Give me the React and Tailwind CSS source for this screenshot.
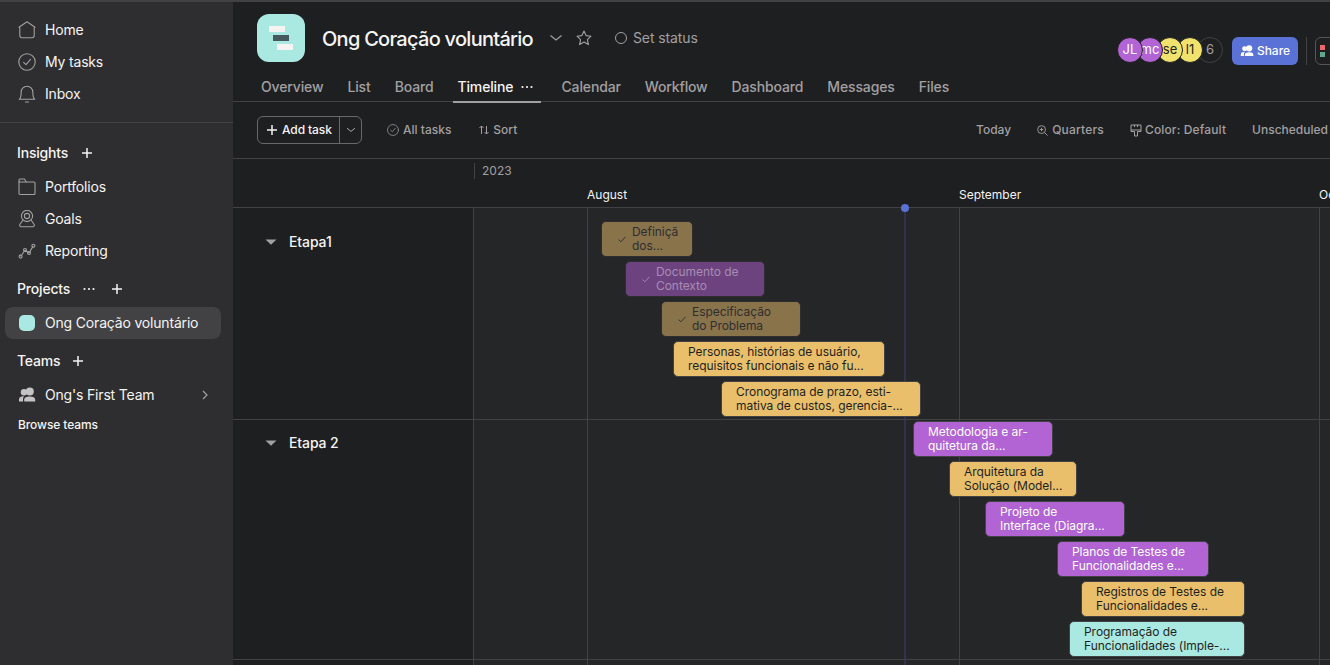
import React from "react";

const Ico = ({ children, className = "", size = 18, vb = 18 }) => (
  <svg width={size} height={size} viewBox={`0 0 ${vb} ${vb}`} fill="none" stroke="currentColor" strokeWidth="1.1" strokeLinecap="round" strokeLinejoin="round" className={"shrink-0 " + className}>{children}</svg>
);
const HomeI = () => <Ico><path d="M9 0.8 L17 6.2 L16.2 7 V14.5 A2.2 2.2 0 0 1 14 16.7 H4 A2.2 2.2 0 0 1 1.8 14.5 V7 L1 6.2 Z" /></Ico>;
const CheckCircle = ({ size = 18 }) => <Ico size={size}><circle cx="9" cy="9" r="8.2" /><path d="M5.6 9.3 L8 11.6 L12.5 6.4" /></Ico>;
const BellI = () => <Ico><path d="M1.2 14.3 C3 13 3.2 11 3.2 7 A5.8 5.8 0 0 1 14.8 7 C14.8 11 15 13 16.8 14.3 Z" /><path d="M7.5 17 H10.5" /></Ico>;
const FolderI = () => <Ico><path d="M1 2 A1 1 0 0 1 2 1 H6.5 L8.2 4 H16 A1 1 0 0 1 17 5 V15.5 A1 1 0 0 1 16 16.5 H2 A1 1 0 0 1 1 15.5 Z" /><path d="M1 4 H8" /></Ico>;
const GoalI = () => <Ico><circle cx="9" cy="6" r="5.6" /><circle cx="9" cy="6" r="2.6" /><path d="M5 10 L1.8 14.5 A1.6 1.6 0 0 0 3.2 16.8 H14.8 A1.6 1.6 0 0 0 16.2 14.5 L13 10" /></Ico>;
const ReportI = () => <Ico><path d="M3 14 L7 8.2 L11 11 L15 4.4" /><circle cx="2.6" cy="14.6" r="1.5" /><circle cx="7" cy="8" r="1.5" /><circle cx="11" cy="11" r="1.5" /><circle cx="15.4" cy="3.8" r="1.5" /></Ico>;
const TeamI = ({ size = 18, className = "" }) => (
  <svg width={size} height={size} viewBox="0 0 18 18" fill="currentColor" className={"shrink-0 " + className}>
    <circle cx="6" cy="6.2" r="3.2" /><circle cx="11.8" cy="5.6" r="4" />
    <path d="M1 15.5 V13.5 C1 11.2 3 10.3 5.4 10.3 H6.4 C5.4 11 5 12 5 13.5 V15.5 Z" />
    <path d="M6.2 15.5 V13.8 C6.2 11.4 8.6 10.5 11.8 10.5 C15 10.5 17.2 11.4 17.2 13.8 V15.5 Z" />
  </svg>
);
const Plus = ({ className = "" }) => (
  <svg width="12" height="12" viewBox="0 0 12 12" stroke="currentColor" strokeWidth="1.5" className={"shrink-0 " + className}><path d="M6 1 V11 M1 6 H11" /></svg>
);
const Dots = ({ className = "" }) => (
  <svg width="12" height="4" viewBox="0 0 12 4" fill="currentColor" className={"shrink-0 " + className}><circle cx="1.5" cy="2" r="1.1" /><circle cx="6" cy="2" r="1.1" /><circle cx="10.5" cy="2" r="1.1" /></svg>
);
const Tri = () => (
  <svg width="12" height="6" viewBox="0 0 12 6" fill="#a2a0a2" className="shrink-0"><path d="M0.5 0.5 H11.5 L6 5.8 Z" /></svg>
);
const Chevron = ({ w = 14, className = "" }) => (
  <svg width={w} height={w} viewBox="0 0 14 14" fill="none" stroke="currentColor" strokeWidth="1.2" className={"shrink-0 " + className}><path d="M1.5 4.5 L7 9 L12.5 4.5" /></svg>
);
const Check = ({ className = "" }) => (
  <svg width="8" height="7" viewBox="0 0 8 7" fill="none" stroke="currentColor" strokeWidth="0.9" className={"shrink-0 " + className}><path d="M0.6 3.6 L2.9 5.8 L7.4 0.8" /></svg>
);

const NavRow = ({ icon, label }) => (
  <div className="flex h-8 items-center gap-[9px] pl-[18px] text-[14px] tracking-[-0.18px] text-[#f5f4f3]">
    <span className="text-[#a2a0a2] flex">{icon}</span>
    <span className="pb-[2px]">{label}</span>
  </div>
);

const Sidebar = () => (
  <aside className="w-[233px] shrink-0 bg-[#2e2e30] flex flex-col">
    <div className="pt-3">
      <NavRow icon={<HomeI />} label="Home" />
      <NavRow icon={<CheckCircle />} label="My tasks" />
      <NavRow icon={<BellI />} label="Inbox" />
    </div>
    <div className="mt-3 border-t border-[#424244]" />
    <div className="mt-[20px] h-5 pl-[17px] flex items-center gap-[13px] text-[14px] tracking-[-0.18px] font-medium text-[#f5f4f3]">
      <span className="pb-[2px]">Insights</span><Plus />
    </div>
    <div className="mt-[8px]">
      <NavRow icon={<FolderI />} label="Portfolios" />
      <NavRow icon={<GoalI />} label="Goals" />
      <NavRow icon={<ReportI />} label="Reporting" />
    </div>
    <div className="mt-[12px] h-5 pl-[17px] flex items-center text-[14px] tracking-[-0.18px] font-medium text-[#f5f4f3]">
      <span className="pb-[2px]">Projects</span><Dots className="ml-[13px]" /><Plus className="ml-[16px]" />
    </div>
    <div className="mt-[8px] ml-[5px] mr-[12px] h-8 rounded-lg bg-[#424244] flex items-center pl-[14px] gap-[10px] text-[14px] tracking-[-0.18px] text-[#f5f4f3]">
      <span className="w-4 h-4 rounded-[5px] bg-[#aae8e2]" />
      <span className="pb-[2px]">Ong Coração voluntário</span>
    </div>
    <div className="mt-[12px] h-5 pl-[17px] flex items-center gap-[12px] text-[14px] tracking-[-0.18px] font-medium text-[#f5f4f3]">
      <span className="pb-[2px]">Teams</span><Plus />
    </div>
    <div className="mt-[8px] h-8 flex items-center pl-[18px] pr-[25px] gap-[9px] text-[14px] tracking-[-0.18px] text-[#f5f4f3]">
      <TeamI className="text-[#c5c3c5]" />
      <span className="flex-1 pb-[2px]">Ong's First Team</span>
      <svg width="6" height="10" viewBox="0 0 6 10" fill="none" stroke="#a2a0a2" strokeWidth="1.2"><path d="M1 1 L5 5 L1 9" /></svg>
    </div>
    <div className="mt-[6px] pl-[18px] text-[12px] leading-[16px] tracking-[-0.1px] font-medium text-[#f5f4f3]">Browse teams</div>
  </aside>
);

const Logo = () => (
  <div className="relative w-12 h-12 rounded-xl bg-[#aae8e2] flex flex-col gap-[3px] pt-3 pl-3 shrink-0">
    <span className="w-4 h-[6px] bg-[#f5f4f3]" />
    <span className="w-4 h-[6px] ml-1 bg-[#46595c]" />
    <span className="w-4 h-[6px] ml-2 bg-[#f5f4f3]" />
  </div>
);

const Avatar = ({ t, bg, fg, z }) => (
  <span className={"w-[26px] h-[26px] -ml-[6px] first:ml-0 rounded-full border border-[#1e1f21] flex items-center justify-center text-[13px] overflow-hidden " + bg + " " + fg + " " + z}>{t}</span>
);

const Tab = ({ children }) => <span className="leading-[20px] pt-[2px]">{children}</span>;

const Header = () => (
  <header className="h-[100px] border-b border-[#424244] shrink-0">
    <div className="flex h-[73px] pl-6">
      <div className="pt-[12px]"><Logo /></div>
      <div className="ml-[17px] flex items-start pt-[24px] text-[#a2a0a2]">
        <span className="text-[20px] leading-[26px] tracking-[-0.73px] font-medium text-[#f5f4f3] whitespace-nowrap">Ong Coração voluntário</span>
        <Chevron w={14} className="ml-[16px] mt-[5px]" />
        <svg width="16" height="16" viewBox="0 0 16 16" fill="none" stroke="currentColor" strokeWidth="1.1" strokeLinejoin="round" className="ml-[13px] mt-[4px] shrink-0"><path d="M8 1 L10.1 5.6 L15 6.2 L11.4 9.6 L12.4 14.6 L8 12.1 L3.6 14.6 L4.6 9.6 L1 6.2 L5.9 5.6 Z" /></svg>
        <span className="ml-[23px] mt-[6px] w-3 h-3 rounded-full border border-[#a2a0a2]" />
        <span className="ml-[6px] mt-[2px] text-[14px] leading-[20px] tracking-[-0.1px] whitespace-nowrap">Set status</span>
      </div>
      <div className="ml-auto flex items-start pt-[35px] -mr-[13px]">
        <div className="flex items-center mr-[9px]">
          <Avatar t="JL" bg="bg-[#b263d4]" fg="text-white" z="z-40" />
          <Avatar t="mc" bg="bg-[#b263d4]" fg="text-white" z="z-30" />
          <Avatar t="se" bg="bg-[#f1e26d]" fg="text-[#1e1f21]" z="z-20" />
          <Avatar t="l1" bg="bg-[#f1e26d]" fg="text-[#1e1f21]" z="z-10" />
          <span className="w-[26px] h-[26px] -ml-[6px] rounded-full border border-[#424244] flex items-center justify-center text-[13px] text-[#a2a0a2]">6</span>
        </div>
        <div className="w-[66px] h-7 rounded-md bg-[#5a71d6] flex items-center justify-center gap-[3px] text-[12px] font-medium text-white">
          <TeamI size={14} />Share
        </div>
        <span className="w-px h-7 bg-[#424244] ml-[8px] mr-[8px]" />
        <div className="w-7 h-7 rounded-md border border-[#565557] flex flex-col items-start gap-[2px] pl-[4px] pt-[7px]">
          <span className="w-[5px] h-[5px] bg-[#e8696b]" />
          <span className="w-[5px] h-[5px] bg-[#62a88a]" />
        </div>
      </div>
    </div>
    <nav className="flex h-[27px] pl-7 text-[14px] tracking-[-0.14px] font-medium text-[#a2a0a2] gap-6 items-start">
      <Tab>Overview</Tab>
      <Tab>List</Tab>
      <Tab>Board</Tab>
      <span className="-mx-1 px-1 w-[88px] shrink-0 h-[28px] border-b-2 border-[#a2a0a2] flex items-start gap-2 pt-[2px] leading-[20px] text-[#f5f4f3]">
        Timeline<Dots className="mt-[8px]" />
      </span>
      <Tab>Calendar</Tab>
      <Tab>Workflow</Tab>
      <Tab>Dashboard</Tab>
      <Tab>Messages</Tab>
      <Tab>Files</Tab>
    </nav>
  </header>
);

const Toolbar = () => (
  <div className="h-[57px] border-b border-[#424244] shrink-0 flex items-center pl-6 text-[12px] font-medium text-[#a2a0a2]">
    <div className="flex h-7 w-[105px] rounded-md border border-[#6a696a] text-[#f5f4f3]">
      <span className="flex-1 flex items-center pl-[8px] gap-[4px] tracking-[-0.1px] border-r border-[#6a696a]"><Plus />Add task</span>
      <span className="w-[21px] flex items-center justify-center text-[#c5c3c5]"><Chevron w={10} /></span>
    </div>
    <span className="ml-[25px] flex items-center gap-[4px]"><CheckCircle size={12} />All tasks</span>
    <span className="ml-[27px] flex items-center gap-[3px]">
      <svg width="12" height="12" viewBox="0 0 12 12" fill="none" stroke="currentColor" strokeWidth="1"><path d="M3.5 10 V2 M1.5 4 L3.5 2 L5.5 4 M8.5 2 V10 M6.5 8 L8.5 10 L10.5 8" /></svg>
      Sort
    </span>
    <div className="ml-auto flex items-center whitespace-nowrap pr-[2px]">
      <span>Today</span>
      <span className="ml-[26px] flex items-center gap-[4px] tracking-[0.2px]">
        <svg width="11" height="11" viewBox="0 0 12 12" fill="none" stroke="currentColor" strokeWidth="1"><circle cx="5" cy="5" r="4.3" /><path d="M8.2 8.2 L11.5 11.5 M3 5 H7 M5 3 V7" /></svg>
        Quarters
      </span>
      <span className="ml-[26px] flex items-center gap-[3px] tracking-[0.14px]">
        <svg width="12" height="13" viewBox="0 0 12 13" fill="none" stroke="currentColor" strokeWidth="1"><path d="M1 1 H11 V6 H1 Z M7.5 1 V3 M4.5 1 V3 M1 6 V7.5 H4.5 V12 H7.5 V7.5 H11 V6" /></svg>
        Color: Default
      </span>
      <span className="ml-[26px]">Unscheduled</span>
    </div>
  </div>
);

const CalHeader = () => (
  <div className="h-[49px] border-b border-[#424244] shrink-0 flex text-[12px]">
    <div className="w-[240px] shrink-0" />
    <div className="flex-1 relative">
      <div className="ml-px mt-[4px] h-4 border-l border-[#424244] pl-[7px] leading-[16px] text-[#a2a0a2]">2023</div>
      <div className="flex mt-[8px] leading-[16px] text-[#f5f4f3] whitespace-nowrap">
        <span className="w-[114px]" />
        <span className="w-[372px]">August</span>
        <span className="w-[360px]">September</span>
        <span>Oct</span>
      </div>
    </div>
  </div>
);

const Gridlines = () => (
  <div className="absolute inset-0 flex">
    <span className="w-[114px] border-l border-[#424244]" />
    <span className="w-[372px] border-l border-[#424244]" />
    <span className="w-[360px] border-l border-[#424244]" />
    <span className="flex-1 border-l border-[#424244]" />
  </div>
);

const styles = {
  gold: "bg-[#eabf6c] text-[#1e1f21] border-[#424244]",
  purple: "bg-[#b263d4] text-white border-[#424244]",
  aqua: "bg-[#aae8e2] text-[#1e1f21] border-[#424244]",
  doneGold: "bg-[#89734b] text-[#2e2e30] border-[#2e2e30]",
  donePurple: "bg-[#6c437f] text-[#a78db3] border-[#2e2e30]",
};

const Bar = ({ pos, kind, lines, done }) => (
  <div className={"absolute h-[36px] rounded-[5px] border flex items-center text-[12px] leading-[14px] tracking-[-0.05px] whitespace-nowrap overflow-hidden " + (done ? "pl-[16px] " : "pl-[14px] ") + pos + " " + styles[kind]}>
    {done && <Check className="mr-[6px]" />}
    <span className="pb-px">{lines[0]}<br />{lines[1]}</span>
  </div>
);

const Row = ({ height, label, top, children }) => (
  <div className={"flex shrink-0 border-b border-[#424244] " + height}>
    <div className={"w-[240px] shrink-0 flex items-start pl-[32px] gap-3 " + top}>
      <span className="h-5 flex items-center"><Tri /></span>
      <span className="text-[14px] leading-[20px] tracking-[-0.1px] font-medium text-[#f5f4f3]">{label}</span>
    </div>
    <div className="relative flex-1">
      <Gridlines />
      {children}
    </div>
  </div>
);

export default function App() {
  return (
    <div className="w-[1330px] h-[665px] overflow-hidden flex flex-col bg-[#1e1f21]" style={{ fontFamily: "Inter, 'Liberation Sans', sans-serif" }}>
      <div className="h-[2px] shrink-0 bg-[#424244]" />
      <div className="flex flex-1 min-h-0">
        <Sidebar />
        <main className="flex-1 min-w-0 flex flex-col relative overflow-hidden">
          <Header />
          <Toolbar />
          <CalHeader />
          <div className="relative flex-1 min-h-0">
            <div className="absolute left-[240px] right-0 top-0 bottom-0 bg-[#252628]" />
            <div className="absolute left-[668px] top-[-4px] bottom-0 flex flex-col items-center w-2">
              <span className="w-2 h-2 rounded-full bg-[#5a71d6] shrink-0" />
              <span className="w-[2px] flex-1 bg-[#30324f]" />
            </div>
            <div className="relative">
              <Row height="h-[212px]" label="Etapa1" top="pt-[24px]">
                <Bar pos="left-[128px] top-[13px] w-[92px]" kind="doneGold" done lines={["Definiçã", "dos..."]} />
                <Bar pos="left-[152px] top-[53px] w-[140px]" kind="donePurple" done lines={["Documento de", "Contexto"]} />
                <Bar pos="left-[188px] top-[93px] w-[140px]" kind="doneGold" done lines={["Especificação", "do Problema"]} />
                <Bar pos="left-[200px] top-[133px] w-[212px]" kind="gold" lines={["Personas, histórias de usuário,", "requisitos funcionais e não fu..."]} />
                <Bar pos="left-[248px] top-[173px] w-[200px]" kind="gold" lines={["Cronograma de prazo, esti-", "mativa de custos, gerencia-..."]} />
              </Row>
              <Row height="h-[240px]" label="Etapa 2" top="pt-[13px]">
                <Bar pos="left-[440px] top-[1px] w-[140px]" kind="purple" lines={["Metodologia e ar-", "quitetura da..."]} />
                <Bar pos="left-[476px] top-[41px] w-[128px]" kind="gold" lines={["Arquitetura da", "Solução (Model..."]} />
                <Bar pos="left-[512px] top-[81px] w-[140px]" kind="purple" lines={["Projeto de", "Interface (Diagra..."]} />
                <Bar pos="left-[584px] top-[121px] w-[152px]" kind="purple" lines={["Planos de Testes de", "Funcionalidades e..."]} />
                <Bar pos="left-[608px] top-[161px] w-[164px]" kind="gold" lines={["Registros de Testes de", "Funcionalidades e..."]} />
                <Bar pos="left-[596px] top-[201px] w-[176px]" kind="aqua" lines={["Programação de", "Funcionalidades (Imple-..."]} />
              </Row>
              <div className="relative h-8 ml-[240px]"><Gridlines /></div>
            </div>
          </div>
        </main>
      </div>
    </div>
  );
}
